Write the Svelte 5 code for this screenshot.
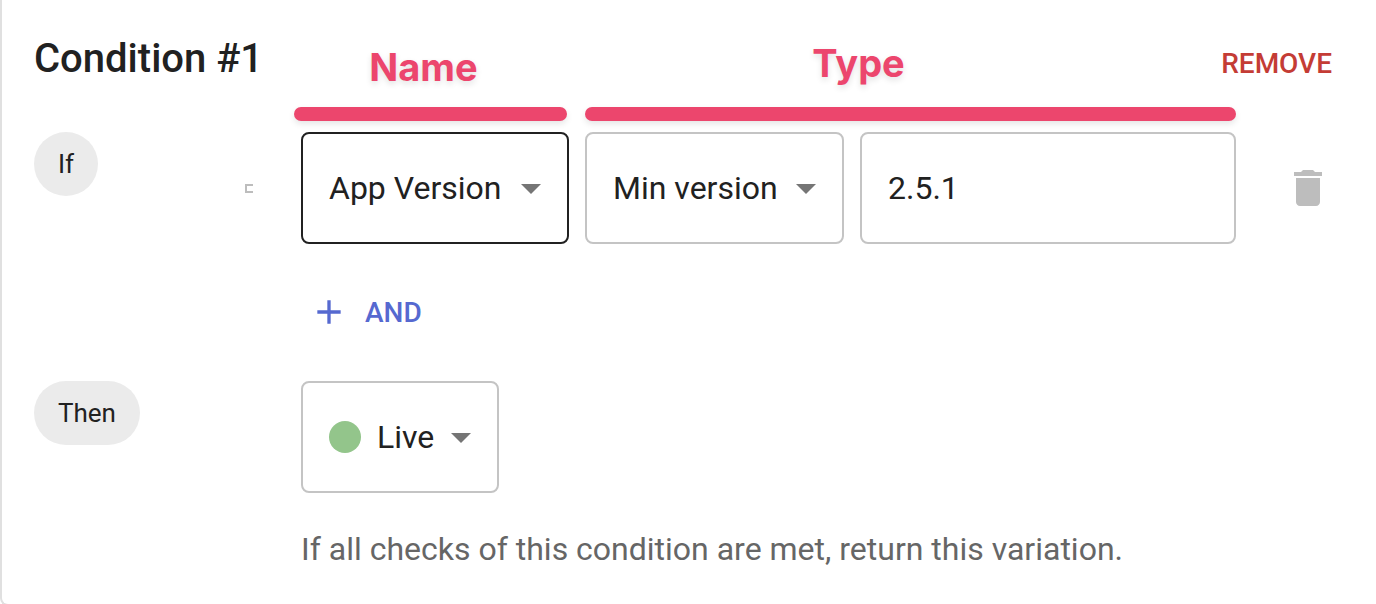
<script>
  let attribute = $state('App Version');
  let operator = $state('Min version');
  let version = $state('2.5.1');
  let variation = $state('Live');
</script>

{#snippet arrow()}
  <svg class="arrow" viewBox="0 0 24 24" aria-hidden="true"><path d="M7 10l5 5 5-5z" /></svg>
{/snippet}

<section class="card">
  <h2 class="title">Condition #1</h2>

  <div class="note note-name">
    <span class="note-text">Name</span>
    <span class="bar"></span>
  </div>
  <div class="note note-type">
    <span class="note-text">Type</span>
    <span class="bar"></span>
  </div>

  <button class="remove" type="button">REMOVE</button>

  <div class="lead row-if">
    <span class="chip">If</span>
    <span class="bracket"></span>
  </div>

  <div class="field attribute">
    <select class="active" aria-label="Name" bind:value={attribute}>
      <option>App Version</option>
    </select>
    {@render arrow()}
  </div>

  <div class="field operator">
    <select aria-label="Type" bind:value={operator}>
      <option>Min version</option>
    </select>
    {@render arrow()}
  </div>

  <input class="version" type="text" aria-label="Version" bind:value={version} />

  <button class="delete" type="button" aria-label="Delete">
    <svg viewBox="0 0 24 24" aria-hidden="true">
      <path d="M6 19c0 1.1.9 2 2 2h8c1.1 0 2-.9 2-2V7H6v12zM19 4h-3.5l-1-1h-5l-1 1H5v2h14V4z" />
    </svg>
  </button>

  <button class="and" type="button">
    <svg viewBox="0 0 24 24" aria-hidden="true"><path d="M19 13h-6v6h-2v-6H5v-2h6V5h2v6h6v2z" /></svg>
    <span>AND</span>
  </button>

  <div class="lead row-then">
    <span class="chip">Then</span>
  </div>

  <div class="outcome">
    <div class="field live">
      <select aria-label="Variation" bind:value={variation}>
        <option>Live</option>
      </select>
      <span class="dot"></span>
      {@render arrow()}
    </div>
    <p class="help">If all checks of this condition are met, return this variation.</p>
  </div>
</section>

<style>
  :global(body) {
    overflow: hidden;
    background: #fff;
  }

  .card {
    box-sizing: border-box;
    display: grid;
    grid-template-columns: 251px 268px 259px minmax(0, 1fr) 112px;
    grid-template-rows: minmax(97px, auto);
    column-gap: 16px;
    padding: 35px 12px 31px 32px;
    border: 2px solid #e0e0e0;
    border-width: 0 0 2px 2px;
    border-radius: 0 0 0 8px;
    font-family: Roboto, sans-serif;
    font-size: 32px;
    color: #212121;
  }

  button,
  select,
  input {
    box-sizing: border-box;
    margin: 0;
    font: inherit;
    color: inherit;
  }

  button {
    display: flex;
    align-items: center;
    padding: 0;
    border: 0;
    background: none;
    cursor: pointer;
  }

  .title {
    grid-area: 1 / 1;
    margin: 0;
    font-size: 40px;
    font-weight: 500;
    line-height: 48px;
    white-space: nowrap;
  }

  .note {
    display: flex;
    flex-direction: column;
    align-self: end;
    margin-bottom: 11px;
    color: #ec466d;
    font-family: Inter, sans-serif;
    font-size: 38px;
    font-weight: 700;
    line-height: 48px;
    text-align: center;
    text-shadow: 0 3px 6px rgba(0, 0, 0, 0.12);
  }

  .note-name {
    grid-area: 1 / 2;
    gap: 16px;
    margin-left: -7px;
    margin-right: 2px;
  }

  .note-name .note-text {
    padding-right: 14px;
  }

  .note-type {
    grid-area: 1 / 3 / 2 / 5;
    gap: 20px;
  }

  .note-type .note-text {
    padding-right: 104px;
  }

  .bar {
    height: 14px;
    border-radius: 7px;
    background: #ec466d;
    box-shadow: 0 3px 6px rgba(0, 0, 0, 0.1);
  }

  .remove {
    grid-area: 1 / 5;
    align-self: start;
    justify-self: end;
    height: 56px;
    margin-right: 32px;
    color: #c43c35;
    font-size: 28px;
    font-weight: 500;
  }

  .lead {
    grid-column: 1;
    display: flex;
    justify-content: space-between;
    align-items: center;
  }

  .row-if {
    grid-row: 2;
  }

  .row-then {
    grid-row: 4;
  }

  .chip {
    align-self: flex-start;
    padding: 0 24px;
    border-radius: 32px;
    background: #ebebeb;
    font-size: 26px;
    line-height: 64px;
  }

  .bracket {
    box-sizing: border-box;
    width: 8px;
    height: 9px;
    margin-right: 32px;
    border: 2px solid #bdbdbd;
    border-right: 0;
  }

  .field {
    display: grid;
    align-items: center;
  }

  .field > * {
    grid-area: 1 / 1;
  }

  .attribute {
    grid-area: 2 / 2;
  }

  .operator {
    grid-area: 2 / 3;
  }

  select,
  .version {
    width: 100%;
    height: 112px;
    padding: 0 26px;
    border: 2px solid #c4c4c4;
    border-radius: 8px;
    background: #fff;
    appearance: none;
    outline: none;
  }

  select.active {
    border-color: #212121;
  }

  .version {
    grid-area: 2 / 4;
  }

  .arrow {
    justify-self: end;
    width: 48px;
    height: 48px;
    margin-right: 14px;
    fill: #757575;
    pointer-events: none;
  }

  .delete {
    grid-area: 2 / 5;
    justify-content: center;
  }

  .delete svg {
    width: 48px;
    height: 48px;
    fill: #bdbdbd;
  }

  .and {
    grid-area: 3 / 2;
    gap: 16px;
    justify-self: start;
    height: 72px;
    margin: 32px 0 33px;
    padding: 0 8px;
    color: #5669d0;
    font-size: 28px;
    font-weight: 500;
  }

  .and svg {
    width: 40px;
    height: 40px;
    fill: currentColor;
  }

  .outcome {
    grid-area: 4 / 2 / 5 / 6;
  }

  .live {
    width: 198px;
  }

  .live select {
    padding-left: 74px;
    padding-right: 48px;
  }

  .dot {
    width: 32px;
    height: 32px;
    margin-left: 28px;
    border-radius: 50%;
    background: #93c58b;
    pointer-events: none;
  }

  .help {
    margin: 32px 0 0;
    color: #666;
    line-height: 48px;
  }
</style>
